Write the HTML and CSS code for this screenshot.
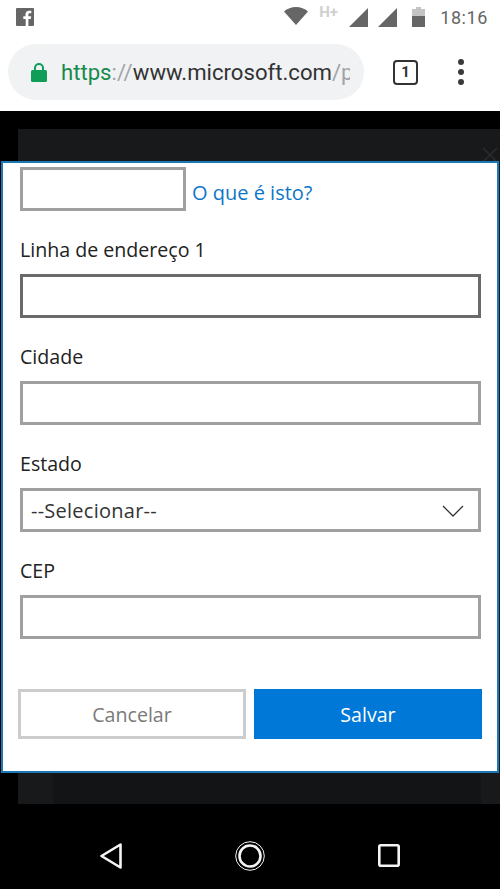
FILE: index.html
```html
<!DOCTYPE html>
<html lang="pt">
<head>
<meta charset="utf-8">
<title>Microsoft</title>
<link rel="stylesheet" href="styles.css">
</head>
<body>
<div class="phone">
  <header class="status">
    <svg class="fb" width="18" height="18" viewBox="0 0 18 18"><path fill="#666" d="M1 0h16a1 1 0 0 1 1 1v16a1 1 0 0 1-1 1h-4.600v-7h2.400l.4-2.800h-2.800V6.600c0-.8.3-1.300 1.400-1.300h1.500V2.800c-.3 0-1.200-.1-2.200-.1-2.200 0-3.600 1.300-3.600 3.700v1.800H7.300V11h2.400v7H1a1 1 0 0 1-1-1V1a1 1 0 0 1 1-1z"/></svg>
    <div class="status-right">
      <svg class="wifi" width="24" height="18" viewBox="0 0 24 18"><path fill="#666" d="M0 4.500C3.300 1.700 7.400 0 12 0s8.700 1.700 12 4.500L12 18z"/></svg>
      <span class="hplus">H+</span>
      <svg class="sig" width="19" height="19" viewBox="0 0 19 19"><path fill="#666" d="M19 0v19H0z"/></svg>
      <svg class="sig" width="19" height="19" viewBox="0 0 19 19"><path fill="#666" d="M19 0v19H0z"/></svg>
      <svg class="batt" width="13" height="20" viewBox="0 0 13 20"><path fill="#c4c4c4" d="M4 0h5v2h4v7H0V2h4z"/><path fill="#666" d="M0 9h13v11H0z"/></svg>
      <span class="time">18:16</span>
    </div>
  </header>
  <nav class="toolbar">
    <div class="omnibox">
      <svg width="16" height="20" viewBox="0 0 16 20"><path fill="none" stroke="#0f9d58" stroke-width="2" d="M4 9V6a4 4 0 0 1 8 0v3"/><rect x="0" y="8" width="16" height="12" rx="1.500" fill="#0f9d58"/></svg>
      <div class="url"><span class="scheme">https</span><span class="sep">://</span>www.microsoft.com<span class="sep">/p</span></div>
    </div>
    <div class="tabs">1</div>
    <div class="menu"><i></i><i></i><i></i></div>
  </nav>
  <main class="page">
    <div class="backdrop"><div class="backdrop-band"></div></div>
    <svg class="close" width="16" height="16" viewBox="0 0 16 16"><path stroke="#2c2c2c" stroke-width="1.500" d="M1 1l14 14M15 1L1 15"/></svg>
    <section class="modal">
      <div class="cvv-row">
        <div class="field small"></div>
        <a class="link">O que é isto?</a>
      </div>
      <label class="label">Linha de endereço 1</label>
      <div class="field focused"></div>
      <label class="label">Cidade</label>
      <div class="field"></div>
      <label class="label">Estado</label>
      <div class="field select">
        <span>--Selecionar--</span>
        <svg width="22" height="12" viewBox="0 0 22 12"><path fill="none" stroke="#333" stroke-width="1.300" d="M1 1l10 10L21 1"/></svg>
      </div>
      <label class="label">CEP</label>
      <div class="field"></div>
      <div class="actions">
        <div class="btn cancel">Cancelar</div>
        <div class="btn save">Salvar</div>
      </div>
    </section>
  </main>
  <footer class="navbar">
    <svg width="22" height="26" viewBox="0 0 22 26"><path fill="none" stroke="#f4f4f4" stroke-width="2.600" stroke-linejoin="round" d="M20.500 1.500v23L1.500 13z"/></svg>
    <svg width="30" height="30" viewBox="0 0 30 30"><circle cx="15" cy="15" r="14.300" fill="none" stroke="#f4f4f4" stroke-width="1"/><circle cx="15" cy="15" r="10.500" fill="none" stroke="#f4f4f4" stroke-width="2.600"/></svg>
    <svg width="22" height="23" viewBox="0 0 22 23"><rect x="1.300" y="1.300" width="19.400" height="20.400" rx="1.500" fill="none" stroke="#f4f4f4" stroke-width="2.600"/></svg>
  </footer>
</div>
</body>
</html>
```
FILE: styles.css
```css
* { box-sizing: border-box; }
html, body { margin: 0; padding: 0; }
body { width: 500px; height: 889px; overflow: hidden; background: #000; font-family: "Open Sans", "Noto Sans", sans-serif; }
.phone { width: 500px; height: 889px; display: flex; flex-direction: column; }

.status { height: 36px; flex: none; background: #fff; display: flex; align-items: flex-start; justify-content: space-between; padding: 0 12px 0 16px; }
.fb { display: block; margin-top: 8px; }
.status-right { display: flex; align-items: flex-start; }
.status-right svg { display: block; }
.wifi { margin-top: 7px; }
.hplus { font: 700 15px/14px "Roboto", sans-serif; color: #d0d0d0; margin: 5px 0 0 11px; width: 22px; }
.sig { margin: 8px 0 0 8px; }
.sig + .sig { margin-left: 10px; }
.batt { margin: 7px 0 0 15px; }
.time { font: 400 18px/22px "Roboto", sans-serif; color: #666; margin: 7px 0 0 15px; letter-spacing: .6px; }

.toolbar { height: 75px; flex: none; background: #fff; display: flex; align-items: center; padding: 0 0 3px 8px; }
.omnibox { width: 356px; height: 56px; flex: none; border-radius: 28px; background: #f0f2f3; display: flex; align-items: center; padding: 0 0 0 23px; overflow: hidden; }
.url { font: 400 22.150px "Roboto", sans-serif; color: #333; white-space: nowrap; margin-left: 14px; width: 289px; overflow: hidden; }
.scheme { color: #188a4c; }
.sep { color: #a0a4a8; }
.tabs { width: 25px; height: 25px; flex: none; margin-left: 29px; border: 2.500px solid #333; border-radius: 4px; font: 700 15px/20px "Roboto", sans-serif; color: #333; text-align: center; }
.menu { margin-left: 40px; display: flex; flex-direction: column; gap: 4px; }
.menu i { display: block; width: 6px; height: 6px; border-radius: 50%; background: #3a3a3a; }

.page { flex: 1; position: relative; background: #000; }
.backdrop { position: absolute; left: 18px; right: 0; top: 18px; bottom: 18px; background: #18191b; }
.backdrop-band { position: absolute; left: 35px; right: 19px; bottom: 0; height: 30px; background: #131415; }
.close { position: absolute; left: 482px; top: 36px; }
.modal { position: absolute; left: 1px; top: 50px; width: 498px; height: 612px; background: #fff; border: 2px solid #1a78b4; padding: 4px 16px 0 17px; }

.cvv-row { display: flex; align-items: center; }
.field { height: 44px; border: 3px solid #a0a0a0; background: #fff; }
.field.small { width: 166px; }
.link { color: #0f76c6; font-size: 20px; margin: 7px 0 0 6px; }
.focused { border-color: #6a6a6a; }
.label { display: block; font-size: 19.600px; line-height: 26px; color: #222; height: 26px; margin: 26px 0 11px; }
.select { display: flex; align-items: center; justify-content: space-between; padding: 1px 14px 0 8px; font-size: 20px; letter-spacing: .25px; color: #333; }
.select svg { display: block; }

.actions { display: flex; gap: 8px; margin: 50px 0 0 -2px; width: 464px; }
.btn { width: 228px; height: 50px; font-size: 19.600px; display: flex; align-items: center; justify-content: center; }
.cancel { border: 3px solid #ccc; color: #7a7a7a; }
.save { background: #0078d7; color: #fff; }

.navbar { height: 67px; flex: none; background: #000; display: flex; align-items: center; padding: 0 0 0 100px; }
.navbar svg:nth-child(1) { margin-right: 113px; }
.navbar svg:nth-child(2) { margin-right: 113px; }
```
